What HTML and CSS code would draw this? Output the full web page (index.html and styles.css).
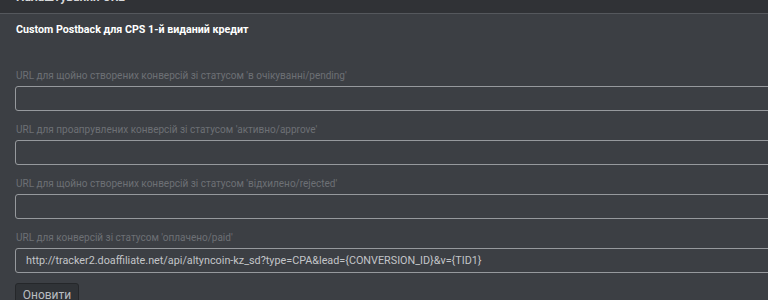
FILE: index.html
```html
<!DOCTYPE html>
<html lang="uk">
<head>
<meta charset="utf-8">
<link rel="stylesheet" href="styles.css">
</head>
<body>
<div class="topbar"><div class="topbar-text">Налаштування URL</div></div>
<div class="panel">
  <div class="title">Custom Postback для CPS 1-й виданий кредит</div>
  <div class="field">
    <label class="label">URL для щойно створених конверсій зі статусом 'в очікуванні/pending'</label>
    <div class="input"></div>
  </div>
  <div class="field">
    <label class="label">URL для проапрувлених конверсій зі статусом 'активно/approve'</label>
    <div class="input"></div>
  </div>
  <div class="field">
    <label class="label">URL для щойно створених конверсій зі статусом 'відхилено/rejected'</label>
    <div class="input"></div>
  </div>
  <div class="field last">
    <label class="label">URL для конверсій зі статусом 'оплачено/paid'</label>
    <div class="input">http://tracker2.doaffiliate.net/api/altyncoin-kz_sd?type=CPA&amp;lead={CONVERSION_ID}&amp;v={TID1}</div>
  </div>
  <button class="btn">Оновити</button>
</div>
</body>
</html>
```

FILE: styles.css
```css
html, body {
  margin: 0;
  padding: 0;
  background: #3c3f44;
  font-family: Roboto, "Noto Sans", "Liberation Sans", sans-serif;
  overflow: hidden;
}
.topbar {
  height: 13px;
  background: #303236;
  border-bottom: 1px solid #55585d;
  overflow: hidden;
  padding-left: 16px;
}
.topbar-text {
  margin-top: -10px;
  font-size: 12px;
  line-height: 14px;
  font-weight: 700;
  color: #d8dadc;
}
.panel {
  padding: 0 0 0 15px;
}
.title {
  margin: 0;
  padding: 9px 0 0 1px;
  font-size: 10.7px;
  line-height: 14px;
  font-weight: 700;
  color: #ffffff;
  height: 14px;
  margin-bottom: 32px;
}
.field {
  display: flex;
  flex-direction: column;
  gap: 3px;
  margin-bottom: 12px;
}
.field.last {
  margin-bottom: 10px;
}
.label {
  padding-left: 1px;
  font-size: 10px;
  line-height: 14px;
  color: #6d7075;
}
.input {
  box-sizing: border-box;
  height: 25px;
  width: 780px;
  border: 1px solid #96999d;
  border-radius: 3px;
  padding: 0 10px;
  font-size: 10.8px;
  line-height: 23px;
  color: #c3c5c8;
  white-space: nowrap;
}
.btn {
  margin: 0;
  height: 24px;
  width: 64px;
  padding: 0;
  background: #303337;
  border: 1px solid #25272a;
  border-radius: 3px;
  color: #b9bdc1;
  font-family: Roboto, "Noto Sans", "Liberation Sans", sans-serif;
  font-size: 12px;
  line-height: 22px;
}
```
